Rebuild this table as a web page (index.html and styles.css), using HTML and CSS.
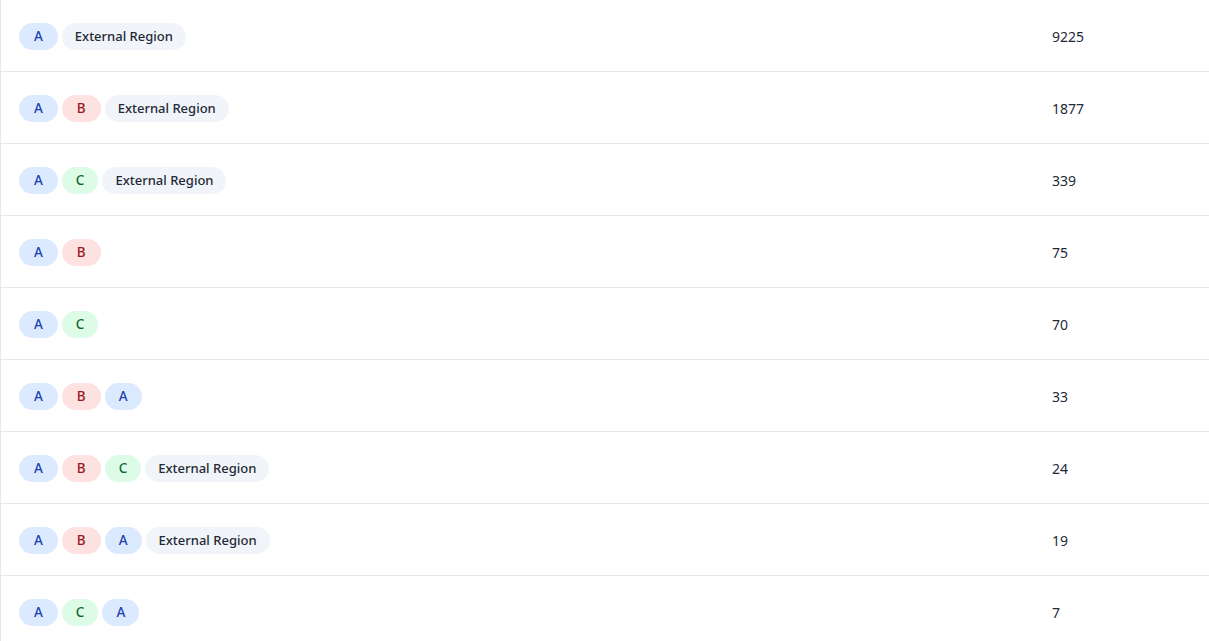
FILE: index.html
```html
<!DOCTYPE html>
<html>
<head>
    <link rel="stylesheet" href="styles.css">
</head>
<body>
    <div class="table">
        <div class="row">
            <div class="tags"><span class="tag tag-a first">A</span><span class="tag tag-ext">External Region</span></div>
            <div class="count">9225</div>
        </div>
        <div class="row">
            <div class="tags"><span class="tag tag-a first">A</span><span class="tag tag-b">B</span><span class="tag tag-ext">External Region</span></div>
            <div class="count">1877</div>
        </div>
        <div class="row">
            <div class="tags"><span class="tag tag-a first">A</span><span class="tag tag-c">C</span><span class="tag tag-ext">External Region</span></div>
            <div class="count">339</div>
        </div>
        <div class="row">
            <div class="tags"><span class="tag tag-a first">A</span><span class="tag tag-b">B</span></div>
            <div class="count">75</div>
        </div>
        <div class="row">
            <div class="tags"><span class="tag tag-a first">A</span><span class="tag tag-c">C</span></div>
            <div class="count">70</div>
        </div>
        <div class="row">
            <div class="tags"><span class="tag tag-a first">A</span><span class="tag tag-b">B</span><span class="tag tag-a">A</span></div>
            <div class="count">33</div>
        </div>
        <div class="row">
            <div class="tags"><span class="tag tag-a first">A</span><span class="tag tag-b">B</span><span class="tag tag-c">C</span><span class="tag tag-ext">External Region</span></div>
            <div class="count">24</div>
        </div>
        <div class="row">
            <div class="tags"><span class="tag tag-a first">A</span><span class="tag tag-b">B</span><span class="tag tag-a">A</span><span class="tag tag-ext">External Region</span></div>
            <div class="count">19</div>
        </div>
        <div class="row">
            <div class="tags"><span class="tag tag-a first">A</span><span class="tag tag-c">C</span><span class="tag tag-a">A</span></div>
            <div class="count">7</div>
        </div>
    </div>
</body>
</html>
```

FILE: styles.css
```css
body {
    margin: 0;
    background: #ffffff;
    font-family: "Noto Sans", "Open Sans", sans-serif;
    color: #1f2937;
}

.table {
    border-left: 1px solid #e5e7eb;
}

.row {
    display: grid;
    grid-template-columns: 1fr 157px;
    align-items: center;
    height: 71px;
    padding-left: 18px;
    border-bottom: 1px solid #e5e7eb;
}

.tags {
    display: flex;
    gap: 4px;
    align-items: center;
    padding-top: 1px;
}

.tag {
    display: inline-flex;
    align-items: center;
    justify-content: center;
    height: 27px;
    padding: 1px 14px 0;
    box-sizing: border-box;
    border-radius: 14px;
    font-size: 13.5px;
    font-weight: 500;
    line-height: 1;
}

.tag.first {
    padding: 1px 15px 0;
}

.tag-b {
    padding: 1px 15px 0;
}

.tag-a {
    background: #dbeafe;
    color: #1e40af;
}

.tag-b {
    background: #fee2e2;
    color: #991b1b;
}

.tag-c {
    background: #dcfce7;
    color: #166534;
}

.tag-ext {
    background: #f1f5f9;
    color: #1f2937;
    padding: 1px 13px 0;
    font-size: 13px;
}

.count {
    font-size: 14px;
    padding-top: 2px;
    color: #1f2937;
}
```
